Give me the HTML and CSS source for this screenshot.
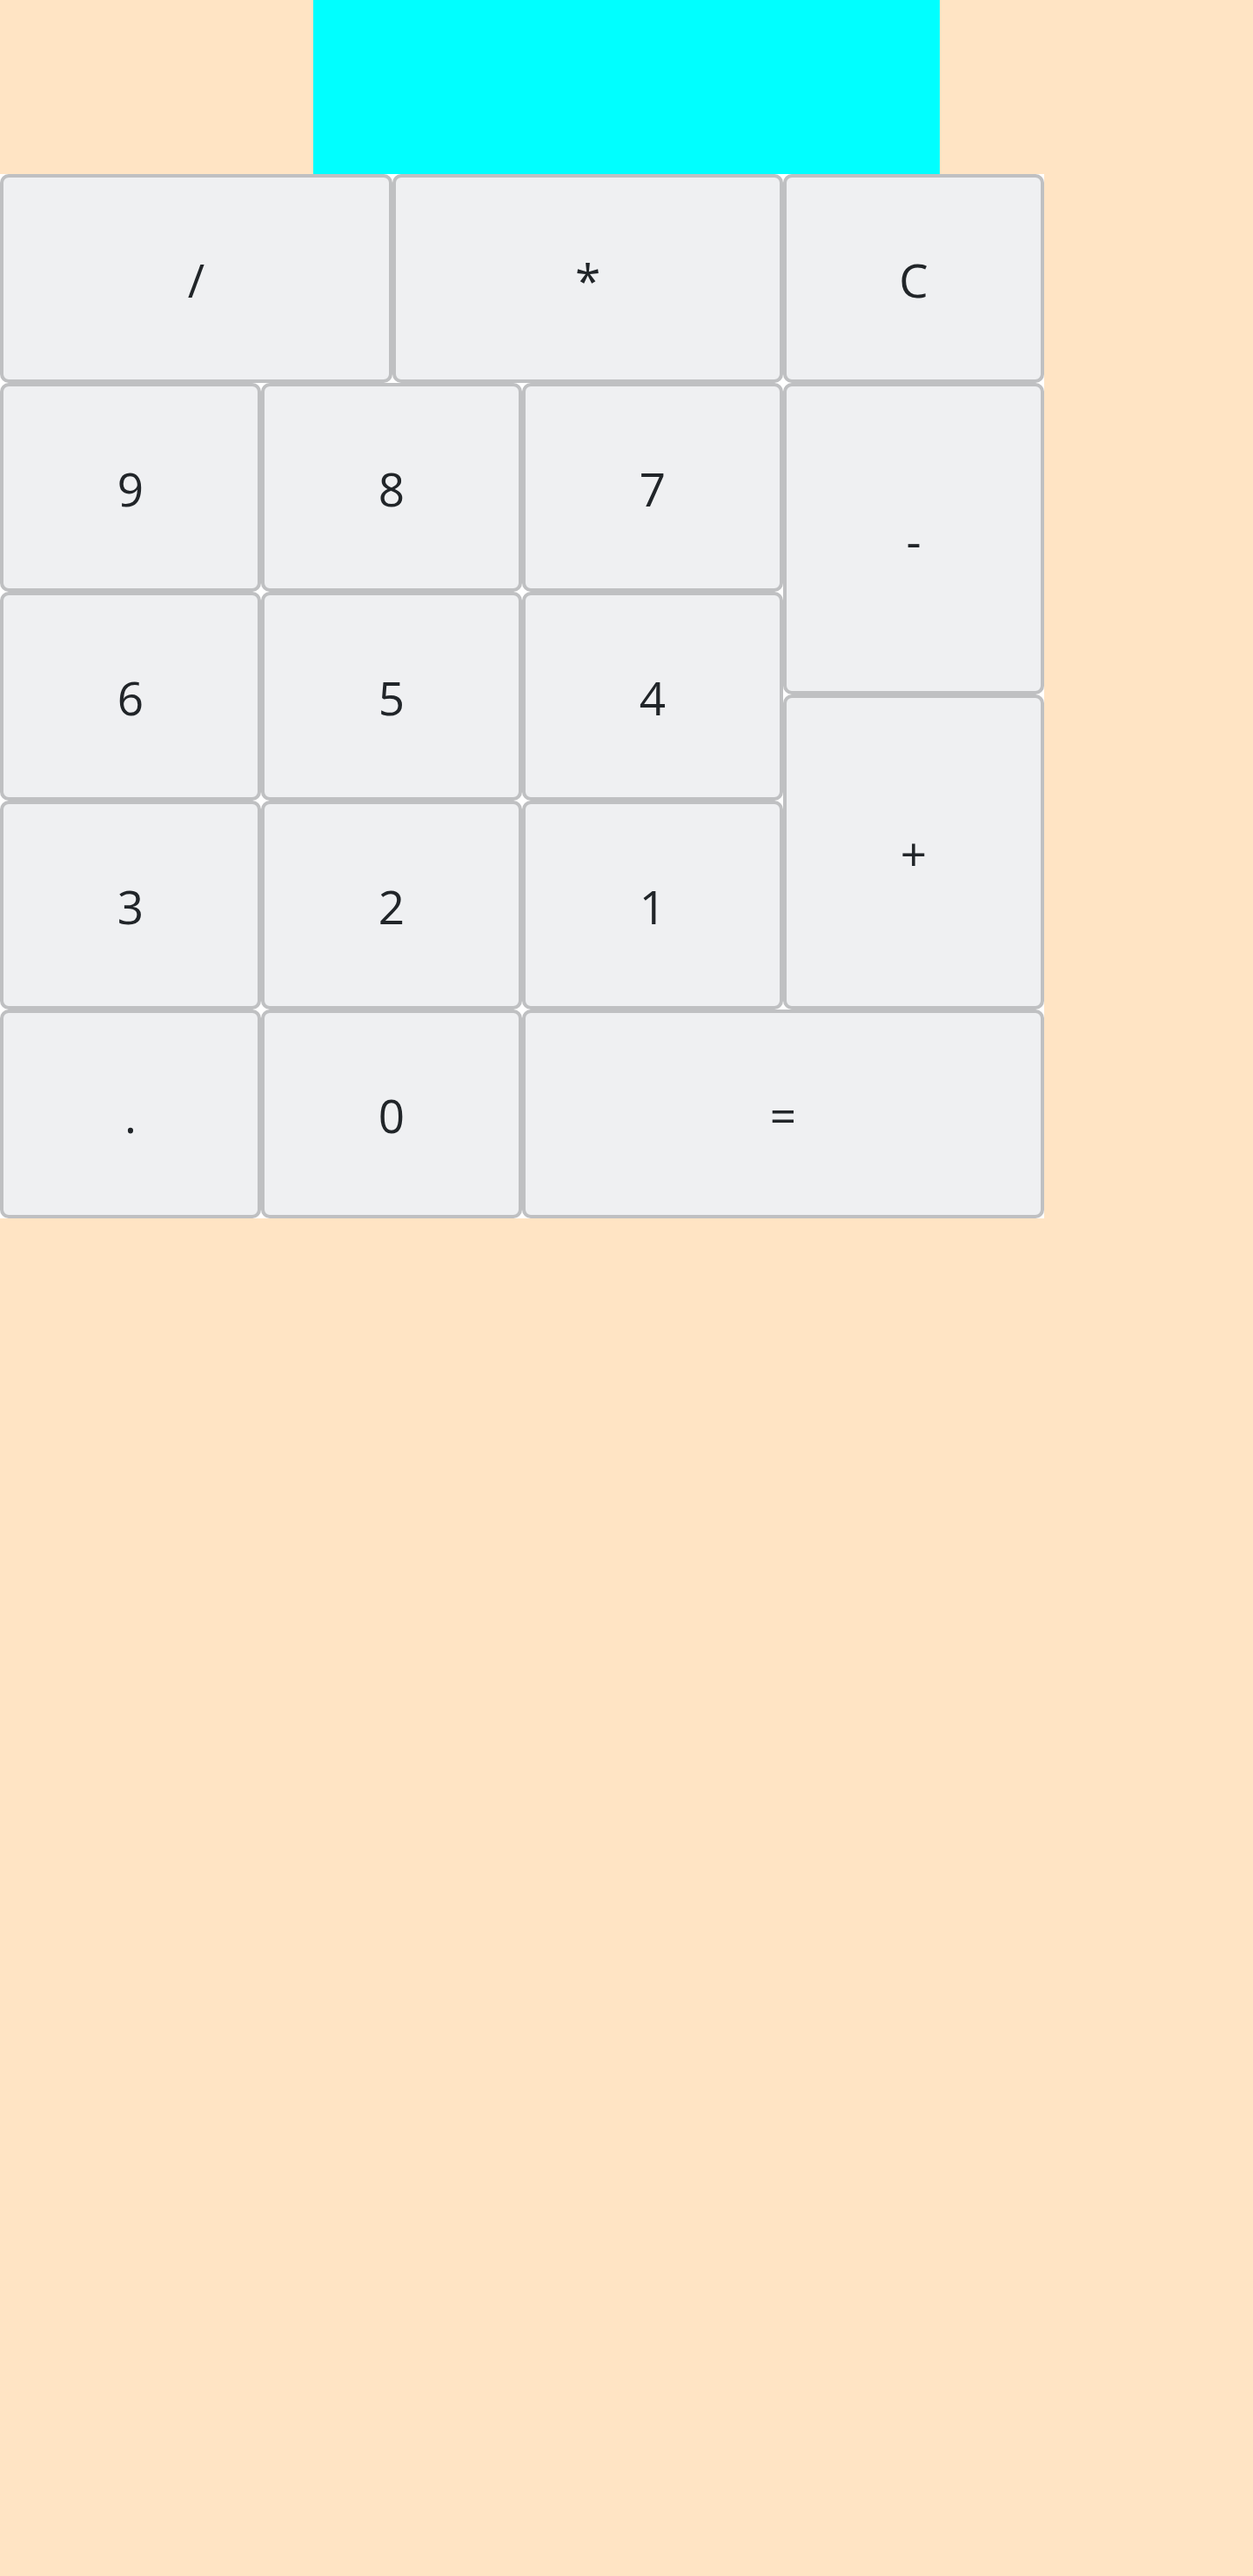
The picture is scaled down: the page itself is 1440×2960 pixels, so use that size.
FILE: index.html
```html
<!DOCTYPE html>
<html>
<head>
<meta charset="utf-8">
<link rel="stylesheet" href="styles.css">
</head>
<body>
<div class="display"></div>
<div class="keys">
  <button class="key k-div">/</button>
  <button class="key k-mul">*</button>
  <button class="key k-clr">C</button>
  <button class="key k-9">9</button>
  <button class="key k-8">8</button>
  <button class="key k-7">7</button>
  <button class="key k-sub">-</button>
  <button class="key k-6">6</button>
  <button class="key k-5">5</button>
  <button class="key k-4">4</button>
  <button class="key k-add">+</button>
  <button class="key k-3">3</button>
  <button class="key k-2">2</button>
  <button class="key k-1">1</button>
  <button class="key k-dot">.</button>
  <button class="key k-0">0</button>
  <button class="key k-eq">=</button>
</div>
</body>
</html>
```

FILE: styles.css
```css
html, body {
  margin: 0;
  padding: 0;
  background: #ffe4c4;
}
.display {
  width: 720px;
  height: 200px;
  margin: 0 auto;
  background: #00ffff;
}
.keys {
  width: 1200px;
  display: grid;
  grid-template-columns: 300px 151px 149px 300px 300px;
  grid-template-rows: 240px 240px 118px 122px 240px 240px;
  background: #ffffff;
}
.key {
  box-sizing: border-box;
  margin: 0;
  padding: 3px 0 0 0;
  border: 4px solid #bfc0c2;
  border-radius: 10px;
  background: #eff0f2;
  color: #212529;
  font-family: "Open Sans", sans-serif;
  font-size: 53px;
  display: flex;
  align-items: center;
  justify-content: center;
}
.k-div { grid-column: 1 / 3; grid-row: 1; }
.k-mul { grid-column: 3 / 5; grid-row: 1; }
.k-clr { grid-column: 5; grid-row: 1; }
.k-9 { grid-column: 1; grid-row: 2; }
.k-8 { grid-column: 2 / 4; grid-row: 2; }
.k-7 { grid-column: 4; grid-row: 2; }
.k-sub { grid-column: 5; grid-row: 2 / 4; }
.k-6 { grid-column: 1; grid-row: 3 / 5; }
.k-5 { grid-column: 2 / 4; grid-row: 3 / 5; }
.k-4 { grid-column: 4; grid-row: 3 / 5; }
.k-add { grid-column: 5; grid-row: 4 / 6; }
.k-3 { grid-column: 1; grid-row: 5; }
.k-2 { grid-column: 2 / 4; grid-row: 5; }
.k-1 { grid-column: 4; grid-row: 5; }
.k-dot { grid-column: 1; grid-row: 6; }
.k-0 { grid-column: 2 / 4; grid-row: 6; }
.k-eq { grid-column: 4 / 6; grid-row: 6; }
```
